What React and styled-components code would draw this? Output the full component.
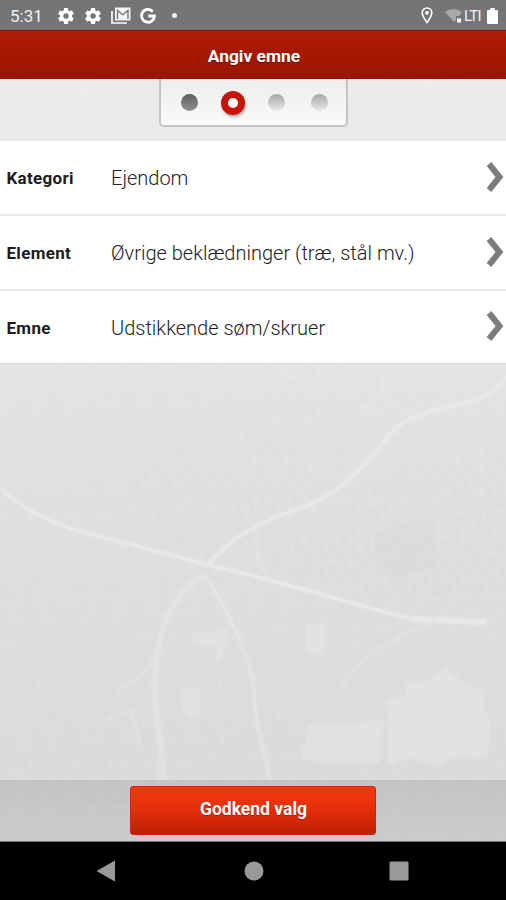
import React from "react";
import styled, { createGlobalStyle } from "styled-components";

const GlobalStyle = createGlobalStyle`
  * { box-sizing: border-box; }
  body { margin: 0; background: #000; }
`;

const Screen = styled.div`
  position: relative;
  display: flex;
  flex-direction: column;
  width: 506px;
  height: 900px;
  overflow: hidden;
  font-family: Roboto, "Liberation Sans", sans-serif;
  background: linear-gradient(#ebebeb 80px, #e3e3e3 365px, #dedede 560px, #dadada 780px);
`;

const MapBackdrop = styled.svg`
  position: absolute;
  inset: 0;
  width: 506px;
  height: 900px;
`;

const StatusBar = styled.div`
  position: relative;
  display: flex;
  align-items: center;
  height: 30px;
  padding: 1px 8px 0 10px;
  background: #757575;
  color: #f2f2f2;
`;

const Clock = styled.span`
  width: 48px;
  font-size: 17px;
  line-height: 20px;
`;

const Icon = styled.svg`
  flex: none;
  display: block;
  width: ${(p) => p.$w}px;
  height: ${(p) => p.$h || p.$w}px;
  margin-left: ${(p) => p.$gap || 0}px;
`;

const NotificationDot = styled.span`
  width: 5px;
  height: 5px;
  margin-left: 16px;
  border-radius: 50%;
  background: #f4f4f4;
`;

const StatusRight = styled.div`
  display: flex;
  align-items: center;
  margin-left: auto;
`;

const NetworkLabel = styled.span`
  width: 19px;
  margin-left: 1px;
  font-size: 15px;
  line-height: 20px;
  letter-spacing: -0.7px;
  white-space: nowrap;
`;

const Header = styled.header`
  position: relative;
  display: flex;
  align-items: center;
  justify-content: center;
  height: 49px;
  padding-top: 2px;
  padding-left: 2px;
  border-top: 1px solid #8e1406;
  border-bottom: 1px solid #94140a;
  background: linear-gradient(#b01c08, #a61803 45%, #9b1502);
  color: #fff;
  font-size: 17.4px;
  font-weight: 700;
  text-shadow: 0 1px 1px rgba(70, 0, 0, 0.5);
`;

const StepArea = styled.div`
  position: relative;
  display: flex;
  justify-content: center;
  align-items: flex-start;
  height: 62px;
`;

const Stepper = styled.div`
  display: grid;
  grid-template-columns: repeat(4, 43.4px);
  justify-content: center;
  align-items: center;
  justify-items: center;
  width: 189px;
  height: 48px;
  padding: 1px 0 0 3px;
  border: 2px solid #c4c4c4;
  border-top: 0;
  border-radius: 0 0 5px 5px;
  background: linear-gradient(#ededed, #fafafa);
`;

const stepFill = {
  done: "linear-gradient(#5e5e5e, #929292)",
  current: "#fff",
  pending: "linear-gradient(#a6a6a6, #e9e9e9)",
};

const Step = styled.span`
  width: ${(p) => (p.$state === "current" ? 24 : 17)}px;
  height: ${(p) => (p.$state === "current" ? 24 : 17)}px;
  border: ${(p) => (p.$state === "current" ? "7px solid #c51408" : "0")};
  border-radius: 50%;
  background: ${(p) => stepFill[p.$state]};
  box-shadow: ${(p) => (p.$state === "current" ? "1px 2px 3px rgba(0,0,0,0.3)" : "none")};
`;

const List = styled.main`
  position: relative;
  border-bottom: 1px solid #d8d8d8;
`;

const Row = styled.div`
  display: flex;
  align-items: center;
  height: ${(p) => p.$height}px;
  padding-left: 6.5px;
  border-bottom: ${(p) => (p.$last ? "0" : "2px solid #e9e9e9")};
  background: #fff;
`;

const Label = styled.span`
  width: 104.5px;
  padding-top: 1px;
  color: #1c1c1c;
  font-size: 17px;
  font-weight: 700;
  letter-spacing: 0.3px;
`;

const Value = styled.span`
  flex: 1;
  padding-top: 1px;
  color: #222;
  font-size: 20px;
  font-weight: 300;
  white-space: nowrap;
`;

const Chevron = styled.svg`
  width: 18px;
  height: 32px;
  margin: 0 2px 2px 0;
  flex: none;
`;

const Footer = styled.footer`
  position: relative;
  display: flex;
  justify-content: center;
  align-items: flex-start;
  height: 62px;
  margin-top: auto;
  padding-top: 6px;
  border-bottom: 1px solid #777;
  background: linear-gradient(rgba(0, 0, 0, 0.1), rgba(0, 0, 0, 0.07));
`;

const Confirm = styled.button`
  width: 246px;
  height: 49px;
  padding: 0 0 4px 1px;
  border: 1px solid #d02412;
  border-radius: 3px;
  background: linear-gradient(#f2380f, #e6300b 45%, #c01f02);
  color: #fff;
  font: 700 17.5px Roboto, sans-serif;
  text-shadow: 0 1px 1px rgba(90, 0, 0, 0.4);
`;

const NavBar = styled.nav`
  position: relative;
  display: grid;
  grid-template-columns: repeat(3, 146.5px);
  justify-content: center;
  justify-items: center;
  align-items: center;
  height: 58px;
  background: #000;
`;

function Gear({ gap }) {
  return (
    <Icon $w={20} $gap={gap} viewBox="0 0 24 24" fill="#fff">
      <path d="M19.14 12.94c.04-.3.06-.61.06-.94 0-.32-.02-.64-.07-.94l2.03-1.58a.49.49 0 0 0 .12-.61l-1.92-3.32a.488.488 0 0 0-.59-.22l-2.39.96c-.5-.38-1.03-.7-1.62-.94l-.36-2.54a.484.484 0 0 0-.48-.41h-3.84c-.24 0-.43.17-.47.41l-.36 2.54c-.59.24-1.13.57-1.62.94l-2.39-.96a.488.488 0 0 0-.59.22L2.74 8.87c-.12.21-.08.47.12.61l2.03 1.58c-.05.3-.09.63-.09.94s.02.64.07.94l-2.03 1.58a.49.49 0 0 0-.12.61l1.92 3.32c.12.22.37.29.59.22l2.39-.96c.5.38 1.03.7 1.62.94l.36 2.54c.05.24.24.41.48.41h3.84c.24 0 .44-.17.47-.41l.36-2.54c.59-.24 1.13-.56 1.62-.94l2.39.96c.22.08.47 0 .59-.22l1.92-3.32a.49.49 0 0 0-.12-.61l-2.01-1.58zM12 15.3A3.3 3.3 0 1 1 12 8.7a3.3 3.3 0 0 1 0 6.6z" />
    </Icon>
  );
}

function Backdrop() {
  return (
    <MapBackdrop viewBox="0 0 506 900" fill="none">
      <defs>
        <pattern id="streets" width="34" height="42" patternUnits="userSpaceOnUse" patternTransform="rotate(-3)">
          <path d="M3 0v21M14 8v34M25 0v30M0 14h19M11 33h23" stroke="#fff" strokeWidth="2" opacity=".08" />
        </pattern>
        <pattern id="blocks" width="13" height="17" patternUnits="userSpaceOnUse" patternTransform="rotate(-38)">
          <path d="M4 0v13" stroke="#999" strokeWidth="3" opacity=".035" />
        </pattern>
        <filter id="soft"><feGaussianBlur stdDeviation="1" /></filter>
      </defs>
      <g filter="url(#soft)">
        <path d="M0 79H506V842H0z" fill="url(#streets)" />
        <path d="M130 470L280 390L370 430L330 490L210 560L140 520z" fill="url(#blocks)" />
        <path d="M265 535L340 500L400 460L506 440V590L390 600L270 570z" fill="url(#blocks)" />
        <path d="M375 535l40-16 18 3 2 43-42 14-17-20z" fill="#d6d6d6" opacity=".4" />
        <path d="M387 698l18-1 1-14 22-3 18-12 20 16 17 6 2 22 6 9-4 39-27-4-22 9-28-7-22 7z" fill="#e5e5e5" opacity=".65" />
        <path d="M308 724l77-4-6 43-77-3zM181 688h20l-3 28-9 4-8-9zM192 634l36-5-1 18-10 16-1-16-23-2zM306 626l18-5 4 15-5 19-17-2z" fill="#e5e5e5" opacity=".55" />
        <path d="M0 488Q22 508 49 520T125 543L205 564Q264 578 320 594T412 619L450 620" stroke="#ebebeb" strokeWidth="3" />
        <path d="M412 619L430 620M436 620L486 622" stroke="#e8e8e8" strokeWidth="6" />
        <path d="M205 567C232 538 252 525 290 512S338 490 356 473C382 448 389 430 406 421C438 404 477 405 492 392Q502 386 506 376" stroke="#e9e9e9" strokeWidth="3.5" />
        <path d="M205 573Q171 596 161 635T157 716T163 780" stroke="#e6e6e6" strokeWidth="6" opacity=".7" />
        <path d="M207 577Q238 630 247 660T254 696T270 780" stroke="#e8e8e8" strokeWidth="3" opacity=".75" />
        <path d="M256 526q-1 39 15 53M430 624Q365 646 340 689M118 689q32-13 36-33M107 720l25-10 9 38" stroke="#e8e8e8" strokeWidth="3" opacity=".4" />
        <path d="M275 364q16 18 37 20l12-21M370 378v19M382 378v19M360 408q12-8 17 2" stroke="#efefef" strokeWidth="3" opacity=".35" />
        <path d="M0 124l92-34M300 141l90-46M420 79l86 53" stroke="#f4f4f4" strokeWidth="3" opacity=".25" />
      </g>
    </MapBackdrop>
  );
}

const rows = [
  { label: "Kategori", value: "Ejendom", height: 75 },
  { label: "Element", value: "Øvrige beklædninger (træ, stål mv.)", height: 75 },
  { label: "Emne", value: "Udstikkende søm/skruer", height: 72 },
];

const steps = ["done", "current", "pending", "pending"];

export default function App() {
  return (
    <Screen>
      <GlobalStyle />
      <Backdrop />
      <StatusBar>
        <Clock>5:31</Clock>
        <Gear gap={-2} />
        <Gear gap={7} />
        <Icon $w={20} $h={17} $gap={8} viewBox="0 0 20 17">
          <path d="M1 4v12h15" fill="none" stroke="#fff" strokeWidth="1.7" />
          <path d="M4 .5h15.5v13H4z" fill="#f5f5f5" />
          <path d="M6.5 12V3.5l5.2 4.2L17 3.5V12" fill="none" stroke="#757575" strokeWidth="1.4" />
        </Icon>
        <Icon $w={16} $gap={9} viewBox="0 0 16 16" fill="none" stroke="#fff" strokeWidth="2.8">
          <path d="M12.8 3.6A6.4 6.4 0 1 0 14.4 8H8.2" />
        </Icon>
        <NotificationDot />
        <StatusRight>
          <Icon $w={12} $h={17} viewBox="0 0 12 17">
            <path d="M6 1a4.8 4.8 0 0 0-4.8 4.8C1.2 9 6 15.5 6 15.5S10.8 9 10.8 5.8A4.8 4.8 0 0 0 6 1z" fill="none" stroke="#fff" strokeWidth="1.6" />
            <circle cx="6" cy="5.8" r="1.9" fill="#fff" />
          </Icon>
          <Icon $w={18} $h={16} $gap={12} viewBox="0 0 18 16">
            <path d="M0 4Q8.5-2 17 4L14.5 8H11v4L9 14z" fill="#a9a9a9" />
            <path d="M12 10.5h4v4h-4z" fill="#fff" />
          </Icon>
          <NetworkLabel>LTI</NetworkLabel>
          <Icon $w={11} $h={16} $gap={4} viewBox="0 0 10 16" preserveAspectRatio="none" fill="#fff">
            <path d="M3 0h4v2h2q1 0 1 1v12q0 1-1 1H1q-1 0-1-1V3q0-1 1-1h2z" />
          </Icon>
        </StatusRight>
      </StatusBar>
      <Header>Angiv emne</Header>
      <StepArea>
        <Stepper>
          {steps.map((state, i) => <Step key={i} $state={state} />)}
        </Stepper>
      </StepArea>
      <List>
        {rows.map(({ label, value, height }, i) => (
          <Row key={label} $height={height} $last={i === rows.length - 1}>
            <Label>{label}</Label>
            <Value>{value}</Value>
            <Chevron viewBox="0 0 18 32">
              <path d="M3 3L13.5 16 3 29" fill="none" stroke="#7c7c7c" strokeWidth="6" />
            </Chevron>
          </Row>
        ))}
      </List>
      <Footer>
        <Confirm>Godkend valg</Confirm>
      </Footer>
      <NavBar>
        <Icon $w={19} $h={22} $gap={-2} viewBox="0 0 19 22"><path d="M19 .5v21L.5 11z" fill="#999" /></Icon>
        <Icon $w={20} $gap={1} viewBox="0 0 20 20"><circle cx="10" cy="10" r="9.5" fill="#999" /></Icon>
        <Icon $w={20} $gap={-2} viewBox="0 0 20 20"><rect x=".5" y=".5" width="19" height="19" rx="1.5" fill="#999" /></Icon>
      </NavBar>
    </Screen>
  );
}
